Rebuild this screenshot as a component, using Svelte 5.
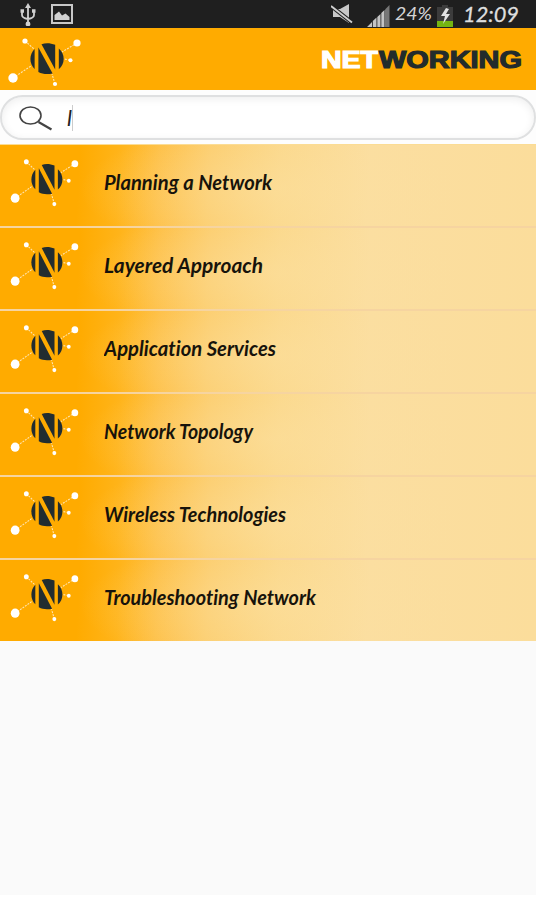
<script>
  const topics = [
    { name: 'Planning a Network', width: 168 },
    { name: 'Layered Approach', width: 159 },
    { name: 'Application Services', width: 172 },
    { name: 'Network Topology', width: 149 },
    { name: 'Wireless Technologies', width: 182 },
    { name: 'Troubleshooting Network', width: 212 }
  ];

  let query = 'l';
</script>

{#snippet logo()}
  <svg class="logo" viewBox="0 0 90 62" preserveAspectRatio="none">
    <g stroke="#fff" stroke-width="1.1" stroke-dasharray="2 1.2" opacity="0.7">
      <line x1="25" y1="13" x2="34" y2="21" />
      <line x1="77" y1="15" x2="62" y2="24" />
      <line x1="13" y1="50" x2="31" y2="38" />
      <line x1="70" y1="32" x2="64" y2="31" />
      <line x1="55" y1="56" x2="52" y2="46" />
    </g>
    <g fill="#fff">
      <circle cx="25" cy="13" r="2.6" />
      <circle cx="77" cy="15" r="3.6" />
      <circle cx="13" cy="50" r="4.7" />
      <circle cx="70.5" cy="32.3" r="2" />
      <circle cx="55" cy="56" r="2.1" />
    </g>
    <g fill="#222d30">
      <path d="M34.600 21C29 26.500 29 35.500 34.600 41Z" />
      <path d="M58.800 20.500C65.300 26 65.300 36 58.800 41.200Z" />
      <path d="M38.400 19.500V44C42.500 46.300 48 46.400 52.600 45.400Z" />
      <path d="M41.500 16.200C45.500 14.700 50.500 14.900 55.200 16.800V41.500Z" />
    </g>
  </svg>
{/snippet}

<div class="phone">
  <div class="status">
    <svg class="usb" width="18" height="24" viewBox="0 0 18 24" fill="none" stroke="#d0d0d0" stroke-width="1.8">
      <path d="M9 4V21M3 9v4q0 3 6 4q6-1 6-4V9" />
      <path d="M9 1l3 5H6Z" fill="#d0d0d0" stroke="none" />
      <circle cx="9" cy="22" r="2.4" fill="#d0d0d0" stroke="none" />
      <path d="M1.500 9h3.500M13 9h3.500" stroke-width="3.500" />
    </svg>
    <svg class="picture" width="22" height="20" viewBox="0 0 22 20">
      <rect x="1" y="1" width="20" height="18" fill="none" stroke="#c8c8c8" stroke-width="2" />
      <path d="M3.500 16v-5l4.500-3.500 3 4 3.500-2 4 3.500v3Z" fill="#d0d0d0" />
    </svg>
    <div class="spacer"></div>
    <svg class="mute" width="22" height="20" viewBox="0 0 22 20">
      <path d="M2 5h7l9-5v19l-9-6H2Z" fill="#c8c8c8" />
      <path d="M0 2l21 16.500" stroke="#1f1f1f" stroke-width="4" />
      <path d="M0 2l21 16.500" stroke="#d0d0d0" stroke-width="1.800" />
    </svg>
    <svg class="signal" width="23" height="22" viewBox="0 0 23 22">
      <path d="M0 22l5-5v5ZM5.800 16l3.700-3.500v9.500H5.800ZM10.300 12l3.200-3v13h-3.200ZM14.300 8l3.200-3v17h-3.200Z" fill="#c4c4c4" />
      <path d="M18 4.500l4.500-4.500v22H18Z" fill="#777" />
    </svg>
    <svg class="percent" width="38" height="28">
      <text x="0" y="20" textLength="37" lengthAdjust="spacingAndGlyphs">24%</text>
    </svg>
    <svg class="battery" width="18" height="24" viewBox="0 0 18 24">
      <path d="M6 1h6v2h5v20H1V3h5Z" fill="#3c3c3c" />
      <path d="M1 17h16v6H1Z" fill="#74b512" />
      <path d="M10 4l-5 8h4l-2 8 7-10h-4l3-5Z" fill="#e4e4e4" />
    </svg>
    <svg class="clock" width="58" height="28">
      <text x="0" y="22" textLength="56" lengthAdjust="spacingAndGlyphs">12:09</text>
    </svg>
  </div>

  <header>
    {@render logo()}
    <svg class="title" width="204" height="30">
      <text x="1" y="24" textLength="57" lengthAdjust="spacingAndGlyphs" fill="#fff" stroke="#fff">NET</text>
      <text x="59" y="24" textLength="143" lengthAdjust="spacingAndGlyphs" fill="#222b2c" stroke="#222b2c">WORKING</text>
    </svg>
  </header>

  <div class="search">
    <div class="field">
      <svg width="36" height="26" viewBox="0 0 36 26" fill="none" stroke="#444">
        <ellipse cx="12.500" cy="10.500" rx="10.500" ry="8.500" stroke-width="1.600" />
        <path d="M20.500 17l13 7.500" stroke-width="2.200" />
      </svg>
      <span class="query">{query}</span>
      <span class="caret"></span>
    </div>
  </div>

  <ul>
    {#each topics as topic}
      <li>
        {@render logo()}
        <svg class="name" width="240" height="36">
          <text x="0" y="24" textLength={topic.width} lengthAdjust="spacingAndGlyphs">{topic.name}</text>
        </svg>
      </li>
    {/each}
  </ul>
</div>

<style>
  :global(body) {
    margin: 0;
    background: #fff;
  }

  .phone {
    width: 536px;
    height: 895px;
    background: #fafafa;
    font-family: Lato, sans-serif;
    overflow: hidden;
  }

  svg {
    display: block;
    flex: none;
  }

  .status {
    display: flex;
    align-items: center;
    height: 28px;
    box-sizing: border-box;
    padding: 0 15px 0 19px;
    background: #1f1f1f;
  }

  .picture {
    margin-left: 14px;
  }

  .spacer {
    flex: 1;
  }

  .signal {
    margin: 4px 5px 0 14px;
  }

  .percent {
    margin-right: 3px;
    font-size: 18px;
    font-style: italic;
    fill: #d4d4d4;
  }

  .battery {
    margin-top: 4px;
  }

  .clock {
    margin-left: 9px;
    font-size: 22px;
    font-style: italic;
    fill: #dedede;
    stroke: #dedede;
    stroke-width: 0.3px;
  }

  header {
    display: flex;
    align-items: center;
    justify-content: space-between;
    height: 62px;
    padding-right: 12px;
    background: #ffab00;
  }

  header .logo {
    width: 90px;
    height: 62px;
  }

  .title {
    font-family: 'Liberation Sans', Arial, sans-serif;
    font-size: 24px;
    font-weight: bold;
    stroke-width: 1.2px;
  }

  .search {
    box-sizing: border-box;
    height: 54px;
    padding-top: 5px;
    background: #fdfdfd;
  }

  .field {
    display: flex;
    align-items: center;
    box-sizing: border-box;
    height: 45px;
    padding-left: 16px;
    border: 2px solid #dfe0e1;
    border-radius: 23px;
    background: #fff;
    box-shadow: inset 0 2px 8px #eeeeee;
  }

  .query {
    margin-left: 13px;
    color: #222;
    font-size: 22px;
    font-style: italic;
    line-height: 24px;
  }

  .caret {
    width: 1px;
    height: 26px;
    background: #ccc;
  }

  ul {
    margin: 0;
    padding: 0;
    list-style: none;
    border-top: 1px solid #fbdc94;
  }

  li {
    display: flex;
    align-items: flex-start;
    box-sizing: border-box;
    height: 83px;
    padding: 4px 0 0 3px;
    border-bottom: 2px solid #f6d4a0;
    background:
      radial-gradient(ellipse 190px 65px at 270px 45px, rgba(252, 224, 160, 0.5), rgba(252, 224, 160, 0)),
      linear-gradient(93deg, #ffab00 80px, #ffb41a 120px, #fec046 160px, #fccd6d 210px, #fbd88b 280px, #fbdea0 370px, #fbdd9b);
  }

  li:last-child {
    height: 81px;
    border-bottom: 0;
  }

  li .logo {
    width: 84px;
    height: 61px;
  }

  .name {
    margin: 17px 0 0 17px;
    font-size: 20px;
    font-style: italic;
    font-weight: bold;
    font-variant-ligatures: none;
    fill: #17130b;
  }
</style>
